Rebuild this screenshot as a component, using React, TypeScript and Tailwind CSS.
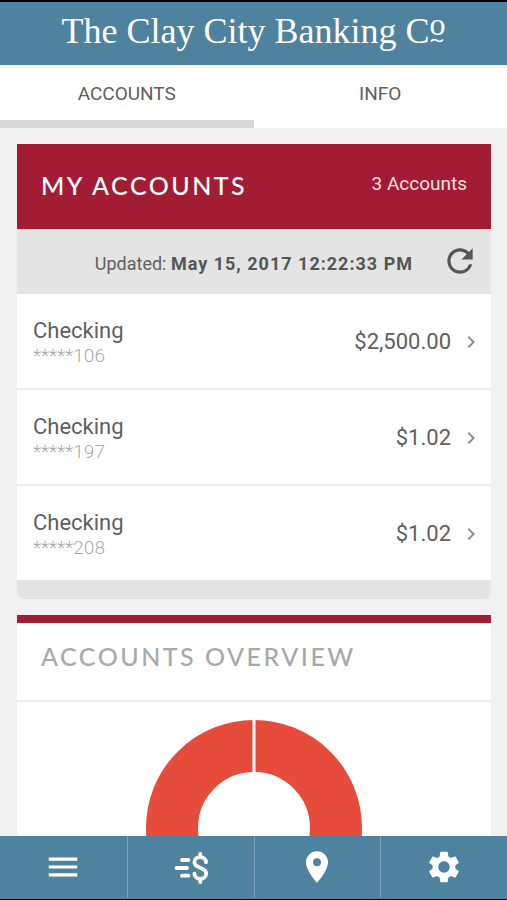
import React, { useState } from 'react';
import {
  MdChevronRight,
  MdLocationOn,
  MdMenu,
  MdRefresh,
  MdSettings,
} from 'react-icons/md';

interface Account {
  name: string;
  mask: string;
  balance: string;
}

const accounts: Account[] = [
  { name: 'Checking', mask: '*****106', balance: '$2,500.00' },
  { name: 'Checking', mask: '*****197', balance: '$1.02' },
  { name: 'Checking', mask: '*****208', balance: '$1.02' },
];

const BankHeader: React.FC = () => (
  <header className="flex h-[65px] shrink-0 justify-center border-t-2 border-black bg-[#4f829e] pt-2">
    <h1 className="flex whitespace-nowrap font-['Liberation_Serif',serif] text-[36px] leading-[42px] text-white">
      The Clay City Banking C
      <span className="flex flex-col items-center text-[32px] leading-[28px]">
        <span>o</span>
        <svg viewBox="0 0 14 5" className="h-[5px] w-[14px]" aria-hidden="true">
          <path d="M1 3.5C3 .5 5 1.5 7 2.5S11 4.5 13 1.5" fill="none" stroke="currentColor" strokeWidth="1.8" />
        </svg>
      </span>
    </h1>
  </header>
);

const Tabs: React.FC = () => {
  const [active, setActive] = useState('ACCOUNTS');

  return (
    <div role="tablist" className="grid h-[63px] shrink-0 grid-cols-2 bg-white">
      {['ACCOUNTS', 'INFO'].map((tab) => (
        <button
          key={tab}
          role="tab"
          aria-selected={active === tab}
          onClick={() => setActive(tab)}
          className={`border-b-8 pt-0.5 text-[19px] leading-6 text-[#606060] cursor-pointer ${
            active === tab ? 'border-[#d8d8d8]' : 'border-white'
          }`}
        >
          {tab}
        </button>
      ))}
    </div>
  );
};

const AccountRow: React.FC<{ account: Account }> = ({ account }) => (
  <li className="border-b-2 border-[#ebebeb] last:border-b-0">
    <button className="flex h-[94px] w-full items-center gap-2 pl-4 pr-2 pt-px text-left cursor-pointer">
      <span className="flex flex-1 flex-col pt-0.5">
        <span className="text-[22px] leading-[25px] text-[#606060]">{account.name}</span>
        <span className="text-[19px] font-light leading-[25px] text-[#a8a8a8]">{account.mask}</span>
      </span>
      <span className="text-[22px] leading-[25px] text-[#606060]">{account.balance}</span>
      <MdChevronRight className="size-6 text-[#8e8e8e]" />
    </button>
  </li>
);

const MyAccounts: React.FC = () => (
  <section className="overflow-hidden rounded-b-md bg-white">
    <div className="flex h-[85px] items-center justify-between bg-[#a21d34] px-6">
      <h2 className="pb-0.5 font-['Lato',sans-serif] text-[25px] font-medium tracking-widest text-white">
        MY ACCOUNTS
      </h2>
      <span className="pb-1.5 text-[19px] leading-6 text-[#f8dfe0]">{accounts.length} Accounts</span>
    </div>
    <div className="flex h-[65px] items-center justify-end gap-7 bg-[#e4e4e4] pb-px pr-3">
      <p className="pt-1 text-[18px] text-[#606060]">
        Updated: <strong className="font-bold tracking-[1px] text-[#555555]">May 15, 2017 12:22:33 PM</strong>
      </p>
      <button aria-label="Refresh" className="cursor-pointer text-[#555555]">
        <MdRefresh className="size-[38px]" />
      </button>
    </div>
    <ul>
      {accounts.map((account) => (
        <AccountRow key={account.mask} account={account} />
      ))}
    </ul>
    <div className="h-[19px] bg-[#e4e4e4]" />
  </section>
);

const AccountsOverview: React.FC = () => (
  <section className="border-t-8 border-[#a21d34] bg-white">
    <h2 className="flex h-[79px] items-center border-b-2 border-[#ebebeb] px-6 pb-2.5 font-['Lato',sans-serif] text-[25px] font-medium tracking-widest text-[#a9a9a9]">
      ACCOUNTS OVERVIEW
    </h2>
    <div className="flex justify-center py-[18px]">
      <svg viewBox="0 0 216 216" className="size-[216px]" role="img" aria-label="Balance by account">
        <circle cx="108" cy="108" r="82" fill="none" stroke="#e64b3b" strokeWidth="52" />
        <path d="M108 0V56" stroke="#ffffff" strokeWidth="3" />
      </svg>
    </div>
  </section>
);

// Dollar sign with speed lines, used for transfers
const TransferIcon: React.FC = () => (
  <svg
    viewBox="0 0 38 38"
    className="size-[38px]"
    fill="none"
    stroke="currentColor"
    strokeWidth="3.8"
    strokeLinecap="round"
    strokeLinejoin="round"
    aria-hidden="true"
  >
    <path d="M10 12h6.500M4.500 20h10.500M10 27.700h6.500" />
    <path d="M34 14.300c0-3-2.400-5.200-5.700-5.200-3.300 0-5.900 2.100-5.900 5.100 0 6.700 11.800 4.300 11.800 11.300 0 3.200-2.600 5.400-5.900 5.400s-5.900-2.200-5.900-5.300" />
    <path d="M28.300 6v3M28.300 31v3" />
  </svg>
);

const navItems = [
  { label: 'Menu', icon: <MdMenu className="size-[38px]" /> },
  { label: 'Transfers', icon: <TransferIcon /> },
  { label: 'Locations', icon: <MdLocationOn className="size-[38px]" /> },
  { label: 'Settings', icon: <MdSettings className="size-[38px]" /> },
];

const BottomNav: React.FC = () => (
  <nav className="grid h-16 shrink-0 grid-cols-4 border-b border-black bg-[#4f829e] pb-px text-white">
    {navItems.map((item) => (
      <button
        key={item.label}
        aria-label={item.label}
        className="flex items-center justify-center border-l border-[#7fa5ba] first:border-l-0 cursor-pointer"
      >
        {item.icon}
      </button>
    ))}
  </nav>
);

export default function App() {
  return (
    <div className="flex h-screen flex-col bg-[#f1f1f1] font-['Roboto',sans-serif]">
      <BankHeader />
      <Tabs />
      <main className="flex min-h-0 flex-1 flex-col gap-4 overflow-y-auto p-4 pl-[17px] [scrollbar-width:none] *:shrink-0">
        <MyAccounts />
        <AccountsOverview />
      </main>
      <BottomNav />
    </div>
  );
}
